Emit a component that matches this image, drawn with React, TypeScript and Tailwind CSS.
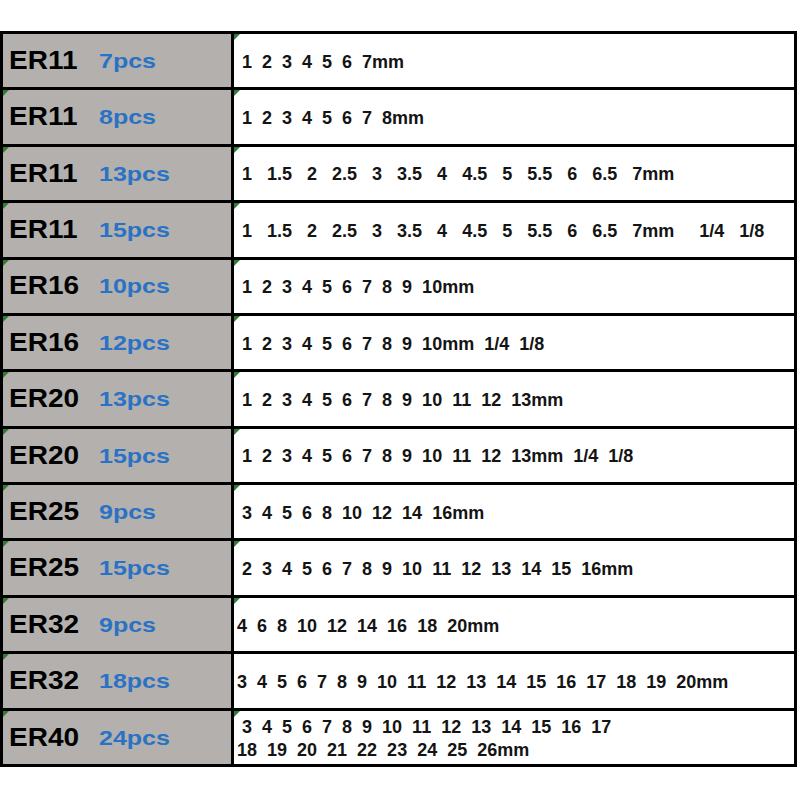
import React from "react";

// Collet set size chart: gray label column, white sizes column.

type Row = { er: string; pcs: string; sizes: string[] };

const rows: Row[] = [
  { er: "ER11", pcs: "7pcs", sizes: [" 1  2  3  4  5  6  7mm"] },
  { er: "ER11", pcs: "8pcs", sizes: [" 1  2  3  4  5  6  7  8mm"] },
  {
    er: "ER11",
    pcs: "13pcs",
    sizes: [" 1   1.5   2   2.5   3   3.5   4   4.5   5   5.5   6   6.5   7mm"],
  },
  {
    er: "ER11",
    pcs: "15pcs",
    sizes: [" 1   1.5   2   2.5   3   3.5   4   4.5   5   5.5   6   6.5   7mm     1/4   1/8"],
  },
  { er: "ER16", pcs: "10pcs", sizes: [" 1  2  3  4  5  6  7  8  9  10mm"] },
  { er: "ER16", pcs: "12pcs", sizes: [" 1  2  3  4  5  6  7  8  9  10mm  1/4  1/8"] },
  { er: "ER20", pcs: "13pcs", sizes: [" 1  2  3  4  5  6  7  8  9  10  11  12  13mm"] },
  {
    er: "ER20",
    pcs: "15pcs",
    sizes: [" 1  2  3  4  5  6  7  8  9  10  11  12  13mm  1/4  1/8"],
  },
  { er: "ER25", pcs: "9pcs", sizes: [" 3  4  5  6  8  10  12  14  16mm"] },
  {
    er: "ER25",
    pcs: "15pcs",
    sizes: [" 2  3  4  5  6  7  8  9  10  11  12  13  14  15  16mm"],
  },
  { er: "ER32", pcs: "9pcs", sizes: ["4  6  8  10  12  14  16  18  20mm"] },
  {
    er: "ER32",
    pcs: "18pcs",
    sizes: ["3  4  5  6  7  8  9  10  11  12  13  14  15  16  17  18  19  20mm"],
  },
  {
    er: "ER40",
    pcs: "24pcs",
    sizes: [" 3  4  5  6  7  8  9  10  11  12  13  14  15  16  17", "18  19  20  21  22  23  24  25  26mm"],
  },
];

function Flag() {
  return (
    <span className="absolute left-0 top-0 h-0 w-0 border-t-[6px] border-r-[6px] border-t-[#2f7d32] border-r-transparent" />
  );
}

export default function App() {
  return (
    <div className="h-[800px] w-[800px] bg-white pt-[31px] font-['Liberation_Sans',Arial,sans-serif]">
      <div className="grid h-[736px] w-[797px] grid-cols-[228px_1fr] grid-rows-13 gap-[3px] bg-black p-[3px]">
        {rows.map((r, i) => (
          <React.Fragment key={i}>
            <div className="relative flex items-center bg-[#b3b0ae] pl-[6px]">
              {i > 0 && <Flag />}
              <span className="w-[90px]">
                <span className="inline-block origin-left scale-x-[1.12] text-[25px] font-bold text-black">
                  {r.er}
                </span>
              </span>
              <span className="inline-block origin-left scale-x-[1.19] text-[21px] font-bold text-[#2a72c4]">
                {r.pcs}
              </span>
            </div>
            <div className="relative flex flex-col justify-center bg-white pl-[3px] pt-[3px]">
              {i !== 11 && <Flag />}
              {r.sizes.map((s, j) => (
                <div
                  key={j}
                  className="whitespace-pre text-[18px] font-bold leading-[23px] text-[#141414]"
                >
                  {s}
                </div>
              ))}
            </div>
          </React.Fragment>
        ))}
      </div>
    </div>
  );
}
